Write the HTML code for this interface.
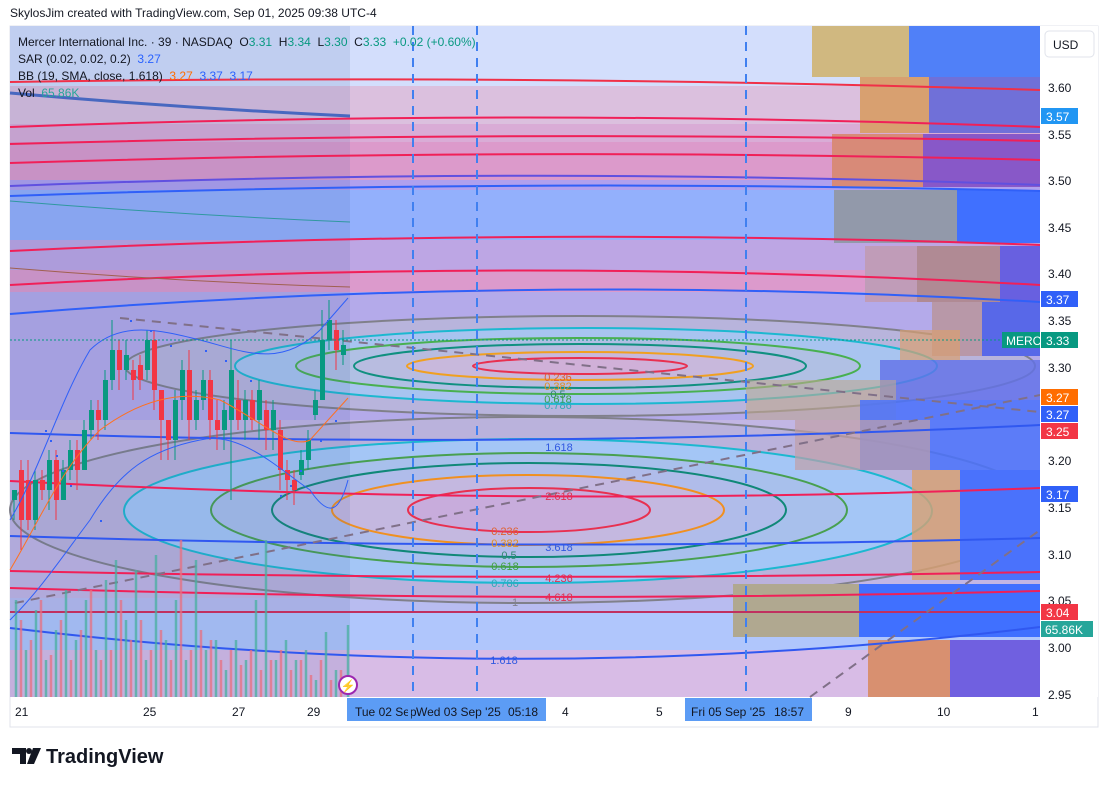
<!DOCTYPE html>
<html><head><meta charset="utf-8"><style>
body{margin:0;width:1108px;height:786px;background:#fff;font-family:"Liberation Sans",sans-serif;overflow:hidden;position:relative}
.t{position:absolute;white-space:nowrap}
</style></head><body>
<div class="t" style="left:10px;top:6px;font-size:12px;color:#131722">SkylosJim created with TradingView.com, Sep 01, 2025 09:38 UTC-4</div>
<svg width="1108" height="786" style="position:absolute;left:0;top:0" font-family="Liberation Sans, sans-serif">
<rect x="10" y="26" width="1088" height="701" fill="#fff" stroke="#e0e3eb"/>
<g>
<rect x="10" y="26" width="1030" height="60" fill="#d3defc"/>
<rect x="10" y="86" width="1030" height="40" fill="#dbc0de"/>
<rect x="10" y="124" width="1030" height="20" fill="#d9acd6"/>
<rect x="10" y="142" width="1030" height="40" fill="#dc9acb"/>
<rect x="10" y="180" width="1030" height="12" fill="#b0a0ee"/>
<rect x="10" y="190" width="1030" height="52" fill="#93b0fc"/>
<rect x="10" y="240" width="1030" height="34" fill="#bda6e4"/>
<rect x="10" y="270" width="1030" height="24" fill="#dc9acc"/>
<rect x="10" y="292" width="1030" height="130" fill="#b4aaea"/>
<rect x="10" y="420" width="1030" height="180" fill="#c2b6e4"/>
<rect x="10" y="598" width="1030" height="14" fill="#b8bcf0"/>
<rect x="10" y="612" width="1030" height="40" fill="#b0c6fc"/>
<rect x="10" y="650" width="1030" height="47" fill="#d8bce6"/>
</g>
<!-- ellipses upper -->
<ellipse cx="580" cy="366" rx="455" ry="50" fill="#b8b4dc" stroke="#80808a" stroke-width="2"/>
<ellipse cx="586" cy="366" rx="351" ry="38" fill="#a8c4f0" stroke="#1cb8d0" stroke-width="2"/>
<ellipse cx="578" cy="366" rx="282" ry="28" fill="#b0c0e4" stroke="#48b050" stroke-width="2"/>
<ellipse cx="580" cy="366" rx="226" ry="22" fill="#b8bce0" stroke="#109080" stroke-width="2"/>
<ellipse cx="580" cy="366" rx="173" ry="14" fill="#c8b8dc" stroke="#f0a020" stroke-width="2"/>
<ellipse cx="580" cy="366" rx="107" ry="8" fill="#d0b0d8" stroke="#e83050" stroke-width="2"/>
<!-- ellipses lower -->
<ellipse cx="527" cy="510" rx="517" ry="93" fill="#bab2dc" stroke="#80808a" stroke-width="2"/>
<ellipse cx="528" cy="511" rx="404" ry="72" fill="#a4c6f6" stroke="#1cb8d0" stroke-width="2"/>
<ellipse cx="529" cy="510" rx="318" ry="57" fill="#a8c0ec" stroke="#48a050" stroke-width="2"/>
<ellipse cx="529" cy="510" rx="257" ry="47" fill="#b0bcea" stroke="#108878" stroke-width="2"/>
<ellipse cx="528" cy="510" rx="196" ry="35" fill="#c4b8e0" stroke="#f09020" stroke-width="2"/>
<ellipse cx="529" cy="510" rx="121" ry="22" fill="#c8acdc" stroke="#e83050" stroke-width="2"/>
<!-- volume profile right -->
<g>
<rect x="812" y="26" width="97" height="51" fill="#d0b880"/><rect x="909" y="26" width="131" height="51" fill="#5080f8"/>
<rect x="860" y="77" width="69" height="56" fill="#d8a070"/><rect x="929" y="77" width="111" height="56" fill="#7070d8"/>
<rect x="832" y="134" width="91" height="53" fill="#d88a78"/><rect x="923" y="134" width="117" height="53" fill="#8858c8"/>
<rect x="834" y="190" width="123" height="53" fill="#9299aa"/><rect x="957" y="190" width="83" height="53" fill="#4070ff"/>
<rect x="865" y="246" width="52" height="56" fill="#c09cb8"/><rect x="917" y="246" width="83" height="56" fill="#b08a94"/><rect x="1000" y="246" width="40" height="56" fill="#6860e0"/>
<rect x="932" y="302" width="50" height="54" fill="#b898a8"/><rect x="982" y="302" width="58" height="54" fill="#5868e8"/>
<rect x="900" y="330" width="60" height="30" fill="#d8a070" opacity=".7"/>
<rect x="880" y="360" width="160" height="40" fill="#6070e8" opacity=".8"/>
<rect x="746" y="380" width="150" height="40" fill="#c0a890" opacity=".6"/>
<rect x="860" y="400" width="180" height="70" fill="#4a72fc" opacity=".85"/>
<rect x="795" y="420" width="135" height="50" fill="#c0a0a8" opacity=".7"/>
<rect x="912" y="470" width="48" height="110" fill="#d8a070" opacity=".8"/><rect x="960" y="470" width="80" height="110" fill="#4a72fc"/>
<rect x="733" y="584" width="126" height="53" fill="#b0a890"/><rect x="859" y="584" width="181" height="53" fill="#4070ff"/>
<rect x="868" y="640" width="82" height="57" fill="#d89070"/><rect x="950" y="640" width="90" height="57" fill="#7060e0"/>
</g>
<!-- left darker overlay -->
<rect x="10" y="26" width="340" height="671" fill="#3a5aa0" opacity=".12"/>
<!-- curved lines -->
<g fill="none" stroke-width="2">
<path d="M10,82 Q525,74 1040,90" stroke="#f03048"/>
<path d="M10,127 Q525,108 1040,127" stroke="#f02058"/>
<path d="M10,144 Q525,130 1040,141" stroke="#f02058"/>
<path d="M10,163 Q525,147 1040,160" stroke="#f02058"/>
<path d="M10,186 Q525,166 1040,185" stroke="#6050e0"/>
<path d="M10,196 Q525,178 1040,191" stroke="#3060f8"/>
<path d="M10,251 Q525,226 1040,245" stroke="#f02058"/>
<path d="M10,285 Q525,256 1040,285" stroke="#f02058"/>
<path d="M10,314 Q525,272 1040,302" stroke="#3060f8"/>
<path d="M10,433 Q525,450 1040,425" stroke="#3058f0"/>
<path d="M10,481 Q525,508 1040,488" stroke="#f02058"/>
<path d="M10,536 Q525,552 1040,538" stroke="#3058f0"/>
<path d="M10,571 Q525,582 1040,572" stroke="#f02058"/>
<path d="M10,588 Q525,604 1040,591" stroke="#f02058"/>
<path d="M10,612 L1040,612" stroke="#c03060"/>
<path d="M10,628 Q525,690 1040,627" stroke="#3058f0"/>
<path d="M10,93 Q180,108 350,116" stroke="#4868c0" stroke-width="3"/>
<path d="M10,201 Q180,215 350,222" stroke="#3098a0" stroke-width="1"/>
<path d="M10,268 Q180,282 350,287" stroke="#a06050" stroke-width="1"/>
<path d="M15,603 L1040,395" stroke="#807088" stroke-dasharray="9,7"/>
<path d="M120,318 L1040,412" stroke="#807088" stroke-dasharray="9,7"/>
<path d="M810,697 L1040,530" stroke="#807088" stroke-dasharray="9,7"/>
</g>
<g stroke="#4080f0" stroke-width="2" stroke-dasharray="9,7"><path d="M413,26V697M477,26V697M746,26V697"/></g>
<!-- fib labels -->
<g font-size="11" text-anchor="middle">
<text x="558" y="381" fill="#e06030">0.236</text><text x="558" y="390" fill="#e09020">0.382</text><text x="558" y="398" fill="#308870">0.5</text><text x="558" y="403" fill="#40a040">0.618</text><text x="558" y="409" fill="#30a8b8">0.786</text>
<text x="559" y="451" fill="#3058e0">1.618</text><text x="559" y="500" fill="#e03050">2.618</text>
<text x="505" y="535" fill="#e06030">0.236</text><text x="505" y="547" fill="#e09020">0.382</text><text x="559" y="551" fill="#3058e0">3.618</text><text x="509" y="559" fill="#308870">0.5</text><text x="505" y="570" fill="#40a040">0.618</text><text x="559" y="582" fill="#e03050">4.236</text><text x="505" y="587" fill="#30a8b8">0.786</text><text x="559" y="601" fill="#e03050">4.618</text><text x="515" y="606" fill="#808090">1</text>
<text x="504" y="664" fill="#3058e0">1.618</text>
</g>
<!-- volume bars -->
<g stroke-width="2.5" opacity=".75">
<path stroke="#48b0a0" d="M16,697V600M26,697V650M36,697V610M46,697V660M56,697V630M66,697V590M76,697V640M86,697V600M96,697V650M106,697V580M116,697V560M126,697V620M136,697V570M146,697V660M156,697V555M166,697V640M176,697V600M186,697V660M196,697V560M206,697V650M216,697V640M226,697V670M236,697V640M246,697V660M256,697V600M266,697V540M276,697V660M286,697V640M296,697V660M306,697V650M316,697V680M326,697V632M336,697V670M348,697V625"/>
<path stroke="#e87080" d="M21,697V620M31,697V640M41,697V600M51,697V655M61,697V620M71,697V660M81,697V630M91,697V590M101,697V660M111,697V650M121,697V600M131,697V640M141,697V620M151,697V650M161,697V630M171,697V660M181,697V540M191,697V650M201,697V630M211,697V640M221,697V660M231,697V650M241,697V665M251,697V650M261,697V670M271,697V660M281,697V650M291,697V670M301,697V660M311,697V675M321,697V660M331,697V680M341,697V670"/>
</g>
<!-- candles -->
<g stroke-width="1">
<path stroke="#089981" d="M14,490V520M35,470V530M49,450V510M63,460V500M70,440V480M84,420V470M91,400V440M105,370V430M112,320V390M126,340V380M147,330V380M175,390V460M182,360V420M196,390V430M203,370V410M224,400V450M231,340V500M245,390V440M259,380V440M273,400V450M301,450V480M308,430V470M315,390V420M322,310V400M329,300V350M343,330V365"/>
<path stroke="#f23645" d="M21,460V550M28,460V530M42,470V500M56,450V520M77,440V490M98,400V440M119,340V390M133,360V400M140,355V390M154,330V410M161,390V460M168,420V460M189,350V440M210,370V440M217,400V450M238,380V430M252,390V430M266,400V450M280,420V490M287,460V500M294,470V505M336,320V370"/>
<g fill="#089981"><rect x="12" y="490" width="5" height="10"/><rect x="33" y="480" width="5" height="40"/><rect x="47" y="460" width="5" height="30"/><rect x="61" y="470" width="5" height="30"/><rect x="68" y="450" width="5" height="20"/><rect x="82" y="430" width="5" height="40"/><rect x="89" y="410" width="5" height="20"/><rect x="103" y="380" width="5" height="40"/><rect x="110" y="350" width="5" height="30"/><rect x="124" y="355" width="5" height="15"/><rect x="145" y="340" width="5" height="30"/><rect x="173" y="400" width="5" height="40"/><rect x="180" y="370" width="5" height="30"/><rect x="194" y="400" width="5" height="20"/><rect x="201" y="380" width="5" height="20"/><rect x="222" y="410" width="5" height="20"/><rect x="229" y="370" width="5" height="50"/><rect x="243" y="400" width="5" height="20"/><rect x="257" y="390" width="5" height="30"/><rect x="271" y="410" width="5" height="20"/><rect x="299" y="460" width="5" height="15"/><rect x="306" y="440" width="5" height="20"/><rect x="313" y="400" width="5" height="15"/><rect x="320" y="340" width="5" height="60"/><rect x="327" y="320" width="5" height="20"/><rect x="341" y="345" width="5" height="10"/></g>
<g fill="#f23645"><rect x="19" y="470" width="5" height="50"/><rect x="26" y="480" width="5" height="40"/><rect x="40" y="480" width="5" height="10"/><rect x="54" y="460" width="5" height="40"/><rect x="75" y="450" width="5" height="20"/><rect x="96" y="410" width="5" height="10"/><rect x="117" y="350" width="5" height="20"/><rect x="131" y="370" width="5" height="10"/><rect x="138" y="365" width="5" height="15"/><rect x="152" y="340" width="5" height="50"/><rect x="159" y="390" width="5" height="30"/><rect x="166" y="420" width="5" height="20"/><rect x="187" y="370" width="5" height="50"/><rect x="208" y="380" width="5" height="40"/><rect x="215" y="420" width="5" height="10"/><rect x="236" y="400" width="5" height="20"/><rect x="250" y="400" width="5" height="20"/><rect x="264" y="410" width="5" height="20"/><rect x="278" y="430" width="5" height="40"/><rect x="285" y="470" width="5" height="10"/><rect x="292" y="480" width="5" height="10"/><rect x="334" y="330" width="5" height="20"/></g>
</g>
<!-- BB lines -->
<g fill="none" stroke-width="1">
<path stroke="#3060f8" d="M10,520 C40,470 60,400 90,350 C120,320 160,330 200,340 C240,350 280,370 320,330 L348,298"/>
<path stroke="#3060f8" d="M10,620 C40,590 60,560 90,520 C120,470 150,450 200,440 C240,430 280,470 310,490 C330,520 340,510 348,480"/>
<path stroke="#ff7020" d="M10,570 C40,520 60,470 100,430 C140,400 180,390 220,400 C260,420 290,450 310,440 L348,398"/>
</g>
<g fill="#3060f8"><path d="M45,430h2v2h-2zM50,440h2v2h-2zM56,455h2v2h-2zM62,470h2v2h-2zM70,485h2v2h-2zM100,520h2v2h-2zM130,320h2v2h-2zM150,330h2v2h-2zM170,345h2v2h-2zM205,350h2v2h-2zM225,360h2v2h-2zM250,380h2v2h-2zM280,495h2v2h-2zM290,485h2v2h-2zM300,470h2v2h-2zM320,440h2v2h-2zM335,420h2v2h-2z"/></g>
<circle cx="348" cy="685" r="9" fill="#fff" stroke="#9c27b0" stroke-width="2"/><text x="348" y="690" font-size="12" fill="#9c27b0" text-anchor="middle">⚡</text>
<path d="M10,340 L1000,340" stroke="#089981" stroke-dasharray="2,2"/>
<!-- price axis -->
<rect x="1040" y="26" width="58" height="671" fill="#fff"/>
<rect x="1045" y="31" width="49" height="26" rx="4" fill="#fff" stroke="#e0e3eb"/>
<text x="1053" y="49" font-size="12" fill="#131722">USD</text>
<g font-size="12" fill="#131722">
<text x="1048" y="92">3.60</text><text x="1048" y="139">3.55</text><text x="1048" y="185">3.50</text><text x="1048" y="232">3.45</text><text x="1048" y="278">3.40</text><text x="1048" y="325">3.35</text><text x="1048" y="372">3.30</text><text x="1048" y="465">3.20</text><text x="1048" y="512">3.15</text><text x="1048" y="559">3.10</text><text x="1048" y="605">3.05</text><text x="1048" y="652">3.00</text><text x="1048" y="699">2.95</text>
</g>
<g font-size="12" fill="#fff">
<rect x="1041" y="108" width="37" height="16" fill="#2196f3"/><text x="1046" y="121">3.57</text>
<rect x="1041" y="291" width="37" height="16" fill="#3060f8"/><text x="1046" y="304">3.37</text>
<rect x="1002" y="332" width="38" height="16" fill="#089981"/><text x="1006" y="345">MERC</text>
<rect x="1041" y="332" width="37" height="16" fill="#089981"/><text x="1046" y="345">3.33</text>
<rect x="1041" y="389" width="37" height="16" fill="#ff6d00"/><text x="1046" y="402">3.27</text>
<rect x="1041" y="406" width="37" height="16" fill="#3060f8"/><text x="1046" y="419">3.27</text>
<rect x="1041" y="423" width="37" height="16" fill="#f23645"/><text x="1046" y="436">3.25</text>
<rect x="1041" y="486" width="37" height="16" fill="#3060f8"/><text x="1046" y="499">3.17</text>
<rect x="1041" y="604" width="37" height="16" fill="#f23645"/><text x="1046" y="617">3.04</text>
<rect x="1041" y="621" width="52" height="16" fill="#26a69a"/><text x="1045" y="634">65.86K</text>
</g>
<!-- time axis -->
<g font-size="12" fill="#131722">
<text x="15" y="716">21</text><text x="143" y="716">25</text><text x="232" y="716">27</text><text x="307" y="716">29</text><text x="562" y="716">4</text><text x="656" y="716">5</text><text x="845" y="716">9</text><text x="937" y="716">10</text><text x="1032" y="716">1</text>
</g>
<rect x="347" y="698" width="199" height="23" fill="#5c9cf5"/>
<rect x="685" y="698" width="127" height="23" fill="#5c9cf5"/>
<g font-size="12" fill="#131722"><text x="355" y="716">Tue 02 Sep</text><text x="416" y="716">Wed 03 Sep '25</text><text x="508" y="716">05:18</text><text x="691" y="716">Fri 05 Sep '25</text><text x="774" y="716">18:57</text></g>
<rect x="408" y="698" width="3" height="23" fill="#5c9cf5"/>
<!-- TV logo -->
<g fill="#131722"><path d="M12,748h14v16h-6v-10h-8z"/><circle cx="29" cy="751" r="3"/><path d="M33,748h8l-7,16h-7z"/></g>
<text x="46" y="763" font-size="20" font-weight="bold" fill="#131722">TradingView</text>
</svg>
<div class="t" style="left:18px;top:35px;font-size:12px;color:#131722">Mercer International Inc. · 39 · NASDAQ &nbsp;O<span style="color:#089981">3.31</span> &nbsp;H<span style="color:#089981">3.34</span> &nbsp;L<span style="color:#089981">3.30</span> &nbsp;C<span style="color:#089981">3.33</span> &nbsp;<span style="color:#089981">+0.02 (+0.60%)</span></div>
<div class="t" style="left:18px;top:52px;font-size:12px;color:#131722">SAR (0.02, 0.02, 0.2) &nbsp;<span style="color:#2962ff">3.27</span></div>
<div class="t" style="left:18px;top:69px;font-size:12px;color:#131722">BB (19, SMA, close, 1.618) &nbsp;<span style="color:#ff6d00">3.27</span> &nbsp;<span style="color:#2962ff">3.37</span> &nbsp;<span style="color:#2962ff">3.17</span></div>
<div class="t" style="left:18px;top:86px;font-size:12px;color:#131722">Vol &nbsp;<span style="color:#26a69a">65.86K</span></div>
</body></html>
